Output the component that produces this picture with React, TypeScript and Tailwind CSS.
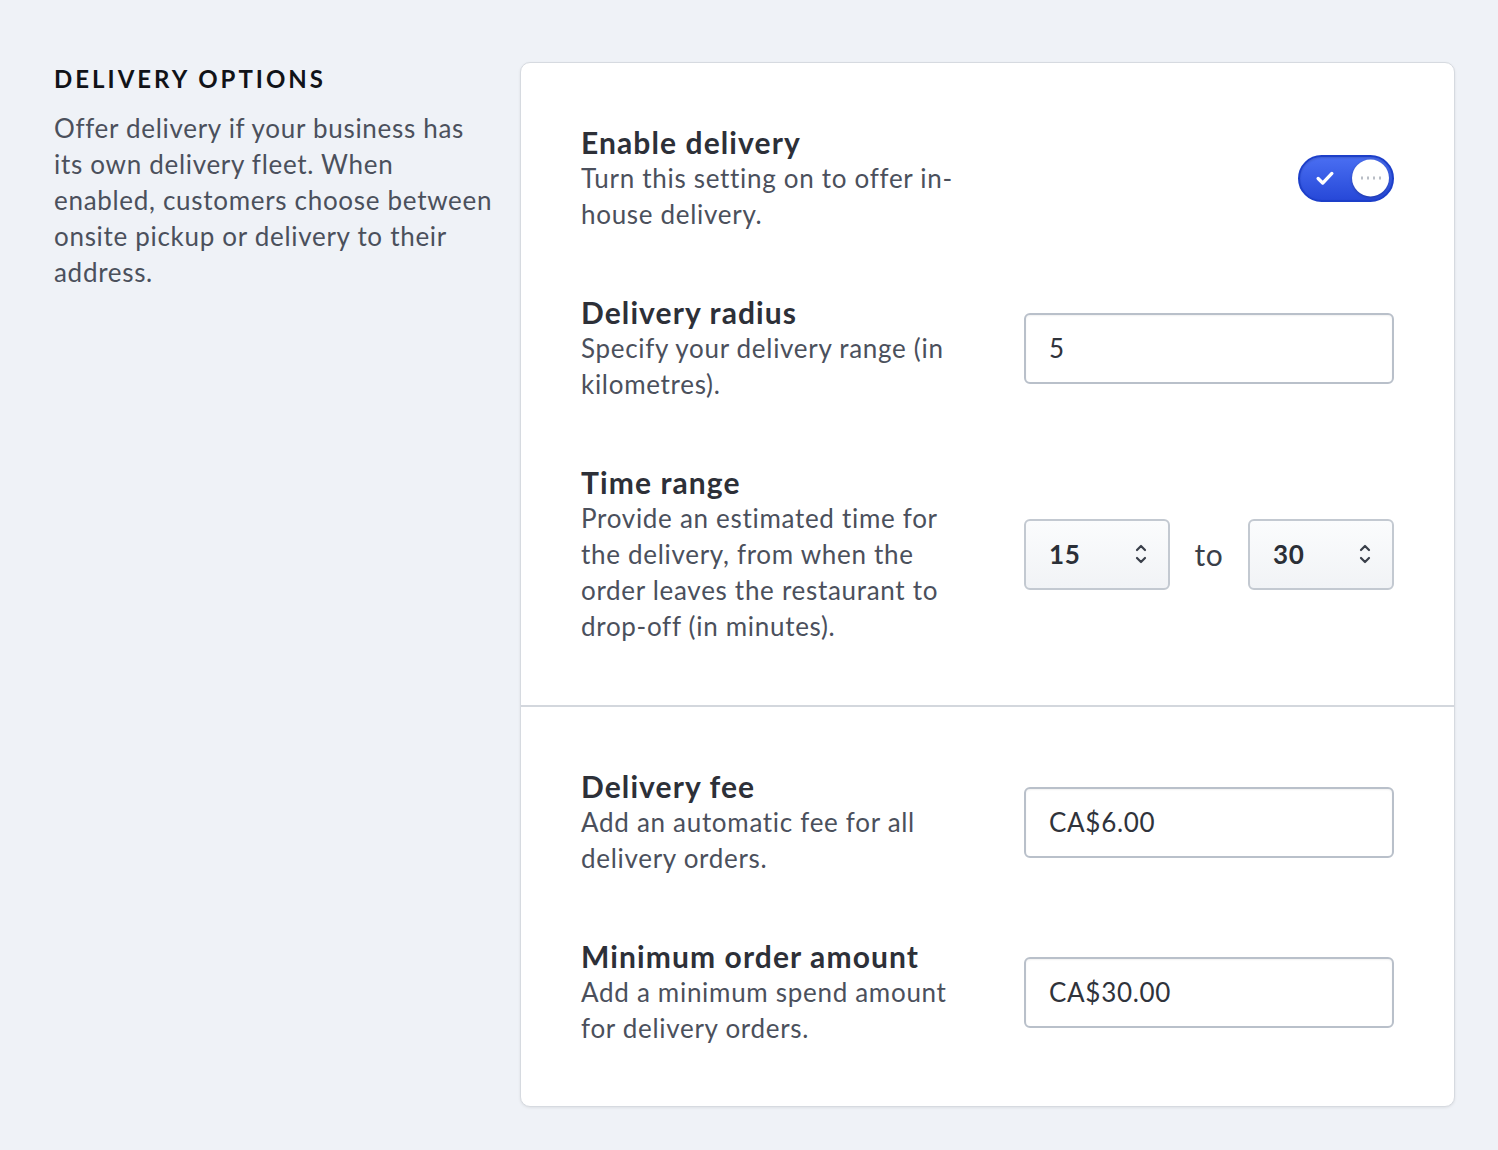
import { useState } from "react";

const font = { fontFamily: "Lato, 'Noto Sans', sans-serif" };

function Toggle({ on, onChange }: { on: boolean; onChange: (v: boolean) => void }) {
  return (
    <button
      type="button"
      onClick={() => onChange(!on)}
      className="relative flex h-[47px] w-[96px] items-center rounded-full border-2 border-[#1d3fc9] bg-gradient-to-b from-[#4a6ef2] to-[#2748d8] shadow-[inset_0_1px_2px_rgba(0,0,0,0.15)]"
    >
      <svg width="22" height="22" viewBox="0 0 24 24" className="ml-[14px]">
        <path d="M4.5 12.5l5 5L19.5 7" fill="none" stroke="white" strokeWidth="3.6" strokeLinecap="round" strokeLinejoin="round" />
      </svg>
      <span className="absolute right-[3px] top-1/2 flex h-[37px] w-[37px] -translate-y-1/2 items-center justify-center gap-[4px] rounded-full bg-white shadow-[0_1px_3px_rgba(0,0,0,0.25)]">
        <span className="h-[3px] w-[2px] bg-[#b9bec6]" />
        <span className="h-[3px] w-[2px] bg-[#b9bec6]" />
        <span className="h-[3px] w-[2px] bg-[#b9bec6]" />
        <span className="h-[3px] w-[2px] bg-[#b9bec6]" />
      </span>
    </button>
  );
}

function Chevrons() {
  return (
    <svg width="14" height="26" viewBox="0 0 14 26">
      <path d="M3 9l4-4 4 4" fill="none" stroke="#3a3f4a" strokeWidth="2.2" strokeLinecap="round" strokeLinejoin="round" />
      <path d="M3 17l4 4 4-4" fill="none" stroke="#3a3f4a" strokeWidth="2.2" strokeLinecap="round" strokeLinejoin="round" />
    </svg>
  );
}

function NumberSelect({ value }: { value: string }) {
  return (
    <div className="flex h-[71px] w-[146px] items-center justify-between rounded-[6px] border-2 border-[#c3c9d1] bg-gradient-to-b from-[#fbfcfd] to-[#f1f3f6] pl-[23px] pr-[20px]">
      <span className="text-[26px] font-bold tracking-[0.7px] text-[#2b2f37]">{value}</span>
      <Chevrons />
    </div>
  );
}

function TextInput({ value }: { value: string }) {
  return (
    <input
      defaultValue={value}
      className="h-[71px] w-[370px] rounded-[6px] border-2 border-[#b9c0ca] bg-white px-[23px] text-[26px] tracking-[0.7px] text-[#2f333b] shadow-[inset_0_1px_2px_rgba(0,0,0,0.06)] outline-none"
      style={font}
    />
  );
}

function Row({ title, desc, children }: { title: string; desc: string; children: React.ReactNode }) {
  return (
    <div className="flex items-center justify-between">
      <div className="w-[384px]">
        <h3 className="text-[30px] font-bold leading-[36px] tracking-[1.1px] text-[#2d3038]">{title}</h3>
        <p className="text-[26px] leading-[36px] tracking-[0.7px] text-[#4b505c]">{desc}</p>
      </div>
      {children}
    </div>
  );
}

export default function App() {
  const [enabled, setEnabled] = useState(true);

  return (
    <div className="min-h-[1150px] bg-[#eff2f7] pl-[54px] pr-[43px] pt-[62px]" style={font}>
      <div className="flex">
        <div className="w-[466px] shrink-0 pr-[20px]">
          <h2 className="text-[24px] font-bold uppercase leading-[34px] tracking-[3px] text-[#111318]">
            Delivery options
          </h2>
          <p className="mt-[14px] text-[26px] leading-[36px] tracking-[0.7px] text-[#4b505c]">
            Offer delivery if your business has its own delivery fleet. When enabled, customers choose between onsite pickup or delivery to their address.
          </p>
        </div>

        <div className="flex-1 rounded-[10px] border border-[#d6dae0] bg-white shadow-[0_1px_3px_rgba(0,0,0,0.08)]">
          <div className="flex flex-col gap-[62px] px-[60px] py-[61px]">
            <Row title="Enable delivery" desc="Turn this setting on to offer in-house delivery.">
              <Toggle on={enabled} onChange={setEnabled} />
            </Row>
            <Row title="Delivery radius" desc="Specify your delivery range (in kilometres).">
              <TextInput value="5" />
            </Row>
            <Row
              title="Time range"
              desc="Provide an estimated time for the delivery, from when the order leaves the restaurant to drop-off (in minutes)."
            >
              <div className="flex w-[370px] items-center justify-between">
                <NumberSelect value="15" />
                <span className="text-[30px] tracking-[0.7px] text-[#3a3f49]">to</span>
                <NumberSelect value="30" />
              </div>
            </Row>
          </div>

          <div className="flex flex-col gap-[62px] border-t-2 border-[#d3d7dd] px-[60px] pb-[60px] pt-[61px]">
            <Row title="Delivery fee" desc="Add an automatic fee for all delivery orders.">
              <TextInput value="CA$6.00" />
            </Row>
            <Row title="Minimum order amount" desc="Add a minimum spend amount for delivery orders.">
              <TextInput value="CA$30.00" />
            </Row>
          </div>
        </div>
      </div>
    </div>
  );
}
